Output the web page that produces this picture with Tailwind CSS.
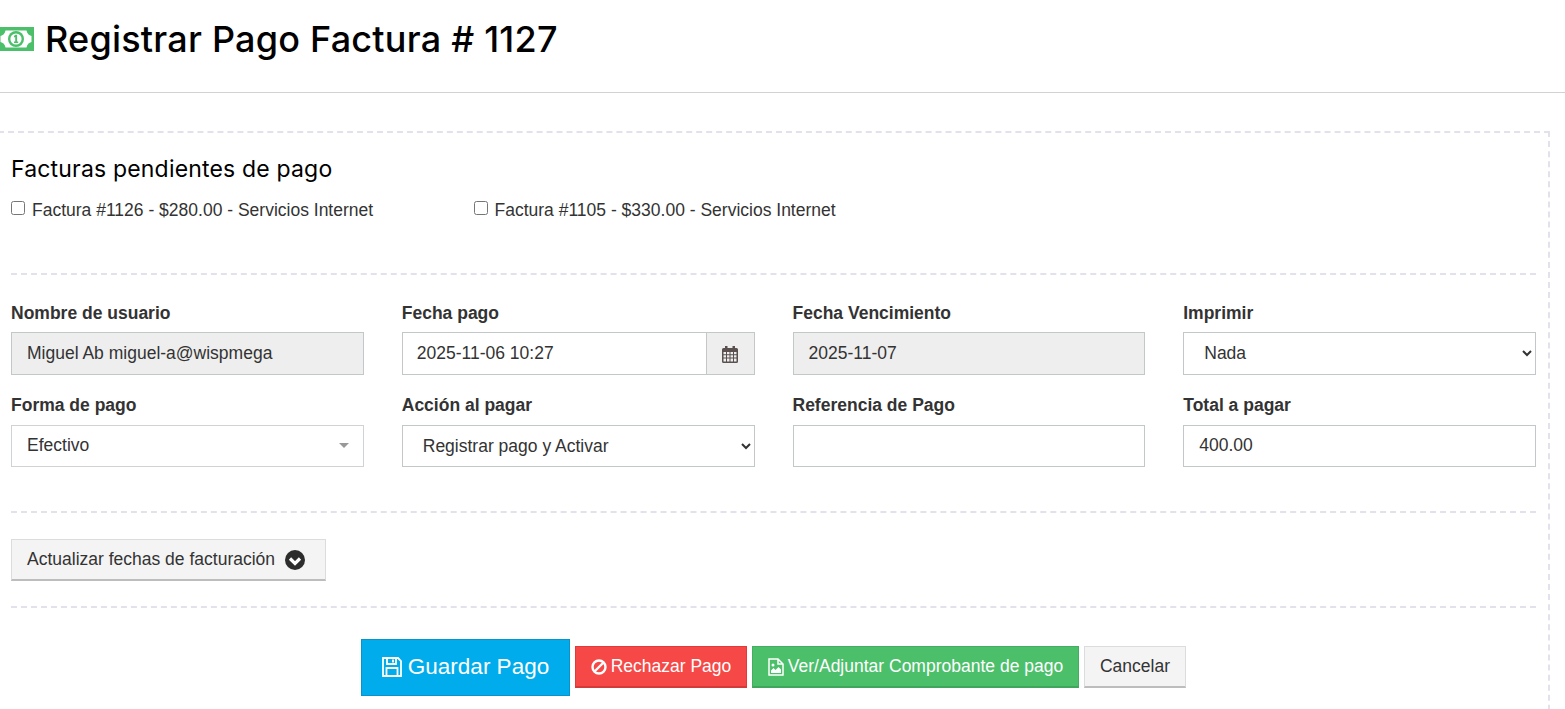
<!DOCTYPE html>
<html lang="es">
<head>
<meta charset="utf-8">
<title>Registrar Pago</title>
<script src="https://cdn.jsdelivr.net/npm/@tailwindcss/browser@4"></script>
</head>
<body class="bg-white overflow-hidden h-[709px] font-['Liberation_Sans',Arial,sans-serif] text-[17.500px] text-[#333]">
<header class="h-[93px] border-b border-[#d2d2d2] flex items-start pt-[18px]">
  <svg class="ml-[-2px] mt-[9px] w-[36px] h-[24px] shrink-0" viewBox="0 0 36 24">
    <path fill="#4cbf6b" d="M0 0h36v24H0z"/>
    <path fill="#fff" d="M7.500 3.500h21c.5 3 2.500 5 5 5.500v6c-2.500.5-4.500 2.500-5 5.500h-21c-.5-3-2.500-5-5-5.500V9c2.500-.5 4.500-2.500 5-5.500z"/>
    <circle cx="18" cy="12" r="8" fill="#4cbf6b"/><circle cx="18" cy="12" r="5.600" fill="#fff"/>
    <path fill="#4cbf6b" d="M17.300 7.800h1.800v6.700h1.100v1.500h-4.200v-1.500h1.200V10l-1.200.5V9.100z"/>
  </svg>
  <h1 class="ml-[11px] mt-[-1px] font-['Inter',sans-serif] text-[36px] leading-[44px] font-medium tracking-[0.220px] text-black">Registrar Pago Factura # 1127</h1>
</header>

<main class="mt-[38px] ml-[-2px] w-[1552px] border-2 border-dashed border-[#e2e2ec] border-b-0 border-l-0 pl-[13px] pr-[12px] h-[600px]">
  <h2 class="mt-[22px] font-['Inter',sans-serif] text-[23px] leading-[28px] font-normal tracking-[0.180px] text-black">Facturas pendientes de pago</h2>
  <div class="mt-[16px] flex h-[22px] text-[#333]">
    <label class="w-[462.500px] flex items-center"><input type="checkbox" class="w-[14px] h-[14px] mr-[7px] mt-[-5px]"><span>Factura #1126 - $280.00 - Servicios Internet</span></label>
    <label class="flex items-center"><input type="checkbox" class="w-[14px] h-[14px] mr-[7px] mt-[-5px]"><span>Factura #1105 - $330.00 - Servicios Internet</span></label>
  </div>
  <hr class="mt-[52px] border-0 border-t-2 border-dashed border-[#e2e2ec]">

  <div class="mt-[27px] grid grid-cols-4 gap-x-[38px] w-[1525px]">
    <div>
      <label class="block font-bold leading-[22px] mb-[8px]">Nombre de usuario</label>
      <input readonly value="Miguel Ab miguel-a@wispmega" class="block w-full h-[43px] px-[15px] border border-[#c2c8c8] bg-[#eeeeee] text-[#333] outline-none">
    </div>
    <div>
      <label class="block font-bold leading-[22px] mb-[8px]">Fecha pago</label>
      <div class="flex h-[43px] border border-[#c2c8c8]">
        <input readonly value="2025-11-06 10:27" class="flex-1 min-w-0 px-[14px] bg-white text-[#333] outline-none">
        <span class="w-[48px] border-l border-[#c2c8c8] bg-[#eeeeee] flex items-center justify-center">
          <svg class="w-[16px] h-[18px]" viewBox="0 0 16 18"><path fill="#5a5050" fill-rule="evenodd" d="M1.500 3H3V1h2.500v2h5V1H13v2h1.500A1.500 1.500 0 0 1 16 4.500v12a1.500 1.500 0 0 1-1.500 1.500h-13A1.500 1.500 0 0 1 0 16.500v-12A1.500 1.500 0 0 1 1.500 3zM1.500 7v2.200h2.500V7zm3.500 0v2.200h2.500V7zm3.500 0v2.200H11V7zm3.500 0v2.200h2.500V7zM1.500 10.200v2.300h2.500v-2.300zm3.500 0v2.300h2.500v-2.300zm3.500 0v2.300H11v-2.300zm3.500 0v2.300h2.500v-2.300zM1.500 13.500v3h2.500v-3zm3.500 0v3h2.500v-3zm3.500 0v3H11v-3zm3.500 0v3h2.500v-3z"/></svg>
        </span>
      </div>
    </div>
    <div>
      <label class="block font-bold leading-[22px] mb-[8px]">Fecha Vencimiento</label>
      <input readonly value="2025-11-07" class="block w-full h-[43px] px-[15px] border border-[#c2c8c8] bg-[#eeeeee] text-[#333] outline-none">
    </div>
    <div>
      <label class="block font-bold leading-[22px] mb-[8px]">Imprimir</label>
      <select class="block w-full h-[43px] pl-[16px] pb-[2px] border border-[#c2c8c8] bg-white text-[#333] outline-none"><option>Nada</option></select>
    </div>

    <div class="mt-[19px]">
      <label class="block font-bold leading-[22px] mb-[9px]">Forma de pago</label>
      <div class="relative h-[42px] border border-[#cfd3d3] flex items-center pl-[15px] pb-[2px] bg-white text-[#333]">Efectivo
        <span class="absolute right-[14px] top-[17px] w-0 h-0 border-x-[5px] border-x-transparent border-t-[5px] border-t-[#999]"></span>
      </div>
    </div>
    <div class="mt-[19px]">
      <label class="block font-bold leading-[22px] mb-[9px]">Acción al pagar</label>
      <select class="block w-full h-[42px] pl-[16px] border border-[#c2c8c8] bg-white text-[#333] outline-none"><option>Registrar pago y Activar</option></select>
    </div>
    <div class="mt-[19px]">
      <label class="block font-bold leading-[22px] mb-[9px]">Referencia de Pago</label>
      <input class="block w-full h-[42px] px-[15px] border border-[#c2c8c8] bg-white outline-none">
    </div>
    <div class="mt-[19px]">
      <label class="block font-bold leading-[22px] mb-[9px]">Total a pagar</label>
      <input readonly value="400.00" class="block w-full h-[42px] px-[15px] pb-[2px] border border-[#c2c8c8] bg-white text-[#333] outline-none">
    </div>
  </div>

  <hr class="mt-[44px] border-0 border-t-2 border-dashed border-[#e2e2ec]">
  <button class="mt-[26px] h-[42px] w-[315px] flex items-center pl-[15px] bg-[#f4f4f4] border border-[#dcdcdc] border-b-2 border-b-[#bdbdbd] text-[#333]">
    <span>Actualizar fechas de facturación</span>
    <svg class="ml-[10px] w-[20px] h-[20px]" viewBox="0 0 20 20"><circle cx="10" cy="10" r="10" fill="#2d2d2d"/><path d="M5 8.500l5 5 5-5" fill="none" stroke="#fff" stroke-width="3.200"/></svg>
  </button>
  <hr class="mt-[25px] border-0 border-t-2 border-dashed border-[#e2e2ec]">

  <div class="mt-[31px] ml-[350px] flex items-start gap-[5px]">
    <button class="w-[209px] h-[57px] pb-[2px] bg-[#00acec] border border-[#0a93c9] text-white text-[22.500px] flex items-center justify-center gap-[6px]">
      <svg class="w-[20px] h-[20px]" viewBox="0 0 20 20" fill="none" stroke="#fff" stroke-width="1.800"><path d="M1 1h15l3 3v15H1zM5 1v6h9V1M4.500 19v-8h11v8M11 2.500v3"/></svg>
      <span>Guardar Pago</span>
    </button>
    <button class="mt-[7px] w-[172px] h-[42px] bg-[#f64846] border border-[#e33a38] border-b-2 border-b-[#d43a38] text-white flex items-center justify-center gap-[4px]">
      <svg class="w-[16px] h-[16px]" viewBox="0 0 16 16" fill="none" stroke="#fff" stroke-width="2.400"><circle cx="8" cy="8" r="6.500"/><path d="M3.500 12.500l9-9"/></svg>
      <span>Rechazar Pago</span>
    </button>
    <button class="mt-[7px] w-[327px] h-[42px] bg-[#4cbf6b] border border-[#43ad60] border-b-2 border-b-[#3fa75b] text-white flex items-center justify-center gap-[4px]">
      <svg class="w-[16px] h-[18px]" viewBox="0 0 16 18"><path fill="none" stroke="#fff" stroke-width="1.500" d="M1 1h9l5 5v11H1zM10 1v5h5"/><path fill="#fff" d="M3 15v-2.500l2.500-2.500 2 2 3-3 2.500 2.500V15z"/><circle cx="5" cy="7" r="1.500" fill="#fff"/></svg>
      <span>Ver/Adjuntar Comprobante de pago</span>
    </button>
    <button class="mt-[7px] w-[102px] h-[42px] bg-[#f4f4f4] border border-[#dcdcdc] border-b-2 border-b-[#bdbdbd] text-[#333]">Cancelar</button>
  </div>
</main>
</body>
</html>
